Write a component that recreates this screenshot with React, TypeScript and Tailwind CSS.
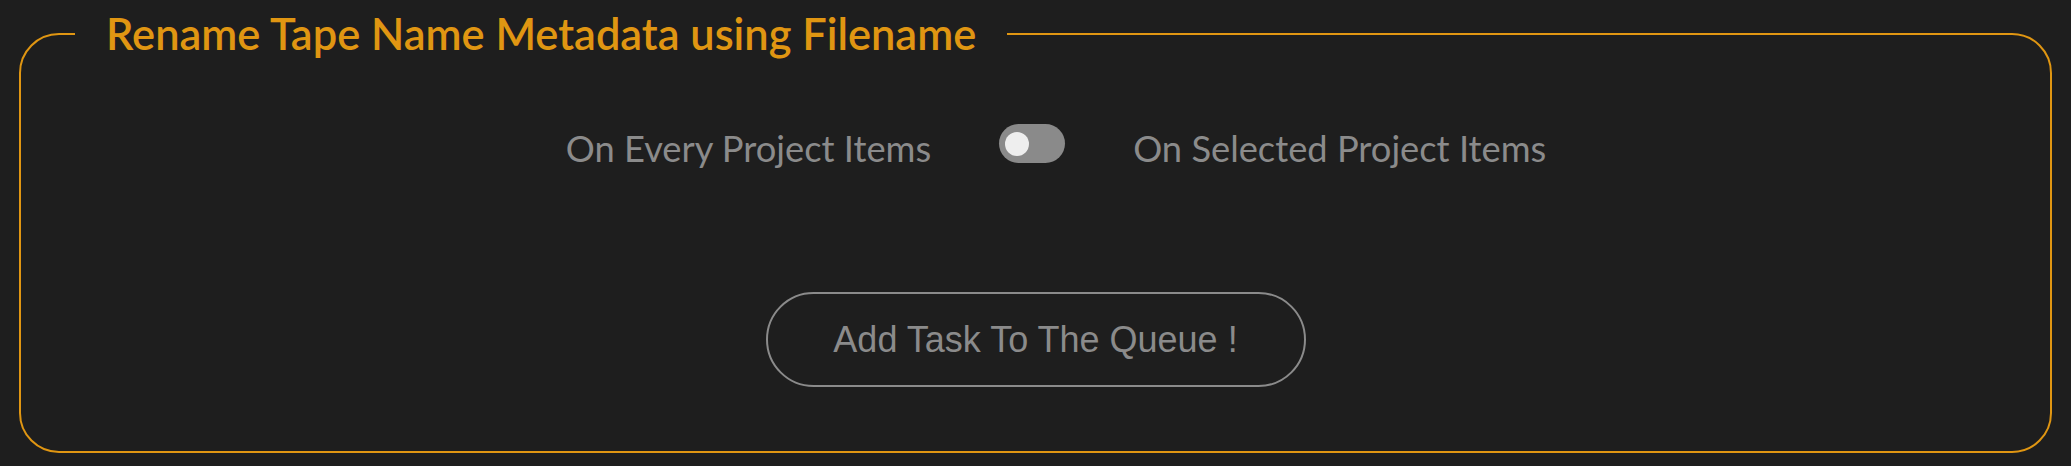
import { useState } from 'react';

export default function App() {
  const [selected, setSelected] = useState(false);
  return (
    <div className="h-[466px] w-full bg-[#1e1e1e] pt-[7px]">
      <fieldset className="mx-[19px] rounded-[40px] border-2 border-[#e09612] pb-[64px]">
        <legend className="ml-[54px] px-[31px] text-[43.4px] font-semibold leading-[53px] text-[#e09612] font-['Lato',sans-serif]">
          Rename Tape Name Metadata using Filename
        </legend>
        <div className="flex flex-col items-center">
          {/* scope toggle */}
          <div className="mt-[55px] flex items-center gap-[68px] pl-[41px] text-[36.3px] leading-[48px] text-[#8b8b8b] font-['Lato',sans-serif]">
            <span className="pt-[9px]">On Every Project Items</span>
            <button
              onClick={() => setSelected(!selected)}
              className="flex h-[39px] w-[66px] items-center rounded-full bg-[#8a8a8a] px-[6px]"
            >
              <span className={`h-[24px] w-[24px] rounded-full bg-[#eeeeee] ${selected ? 'ml-auto' : ''}`} />
            </button>
            <span className="pt-[9px]">On Selected Project Items</span>
          </div>
          <button className="mt-[120px] h-[95px] w-[540px] rounded-full border-2 border-[#8b8b8b] text-[36px] text-[#8b8b8b] font-['Liberation_Sans',Arial,sans-serif]">
            Add Task To The Queue !
          </button>
        </div>
      </fieldset>
    </div>
  );
}
